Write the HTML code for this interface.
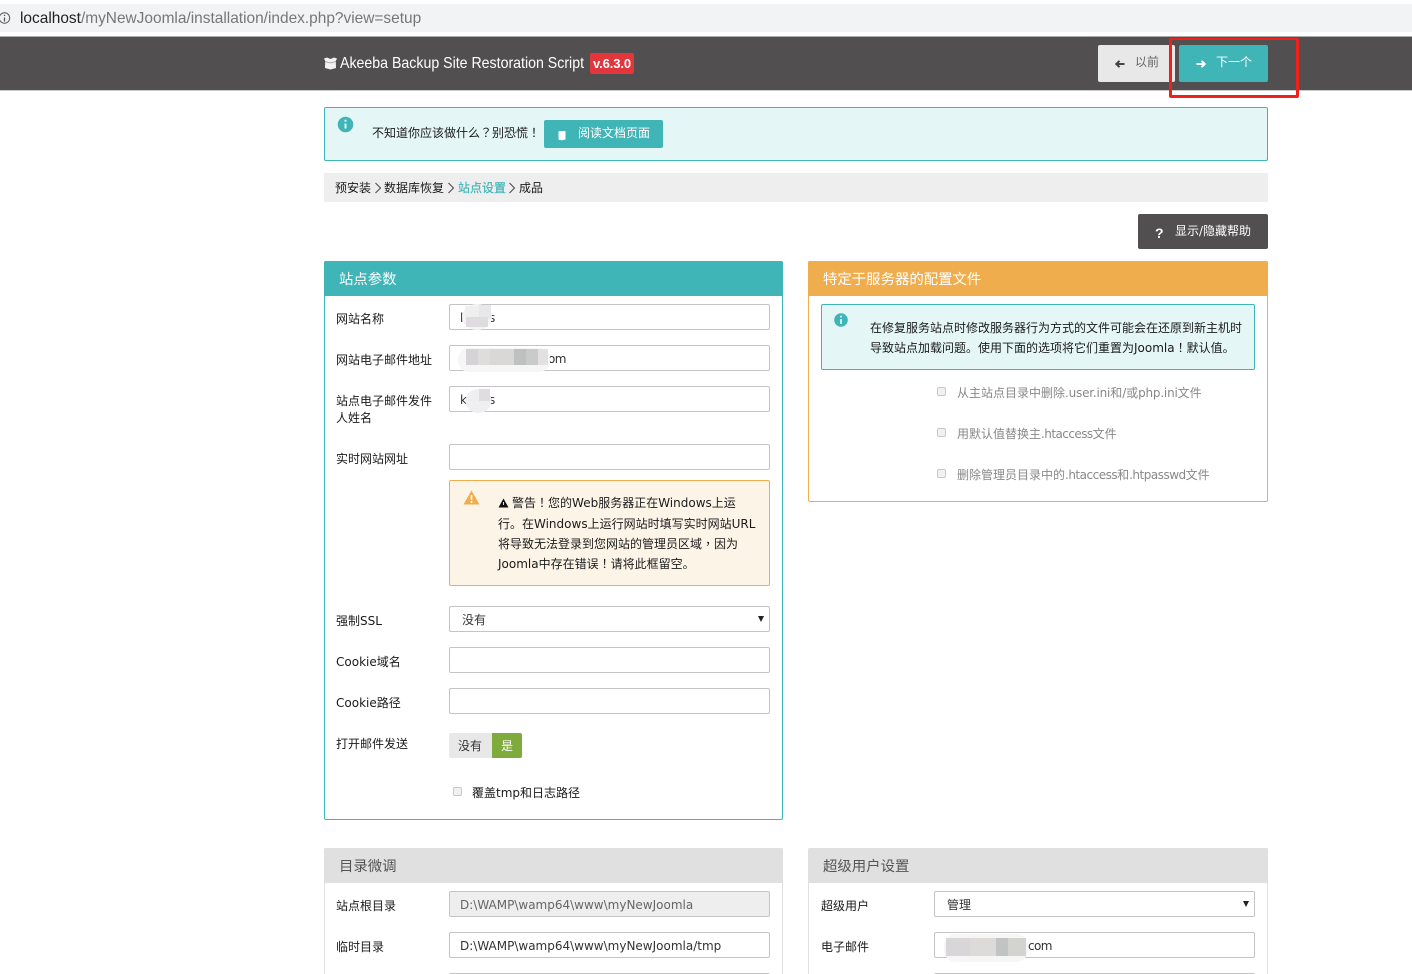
<!DOCTYPE html>
<html><head><meta charset="utf-8"><style>
html,body{margin:0;padding:0;background:#fff;width:1412px;height:974px;overflow:hidden}
body{position:relative;font-family:"DejaVu Sans","Noto Sans CJK SC",sans-serif;font-size:12px;color:#1a1a1a}
.a{position:absolute;white-space:nowrap}
.t{position:absolute;white-space:nowrap;line-height:20px;font-size:12px;color:#1a1a1a}
.c{font-family:"Liberation Sans","Noto Sans CJK SC",sans-serif}
.z{font-family:"Noto Sans CJK TC",sans-serif}
.i{position:absolute;box-sizing:border-box;left:449px;width:321px;height:26px;background:#fff;border:1px solid #c4c4c4;border-radius:2px;font-size:12px;line-height:26px;padding-left:10px;color:#333;white-space:nowrap}
.p{position:absolute;box-sizing:border-box;border-radius:2px}
.h{position:absolute;height:35px;line-height:38px;font-size:14.4px;padding-left:15px;box-sizing:border-box;border-radius:2px 2px 0 0}
.cb{position:absolute;box-sizing:border-box;width:9px;height:9px;border:1px solid #c8c8c8;background:#f1f1f1;border-radius:2px}
.blur{position:absolute}
.arrow{position:absolute;width:0;height:0;border-left:3.5px solid transparent;border-right:3.5px solid transparent;border-top:6px solid #222}
</style></head><body>

<div class="a" style="left:0;top:4px;width:1412px;height:28px;background:#f1f3f4"></div>
<svg class="a" style="left:0;top:12px" width="12" height="13" viewBox="0 0 12 13"><circle cx="4.500" cy="6" r="5.200" fill="none" stroke="#555" stroke-width="1"/><path d="M4.500 5.500v4M4.500 2.800v1.200" stroke="#555" stroke-width="1.300"/></svg>
<div class="a c" style="left:20px;top:9px;line-height:20px;font-size:15.45px;color:#777"><span style="color:#222">localhost</span>/myNewJoomla/installation/index.php?view=setup</div>

<div class="a" style="left:0;top:36px;width:1412px;height:1px;background:#aaa"></div>
<div class="a" style="left:0;top:37px;width:1412px;height:53px;background:#514f50"></div>
<div class="a" style="left:0;top:90px;width:1412px;height:1px;background:#ccc"></div>

<svg class="a" style="left:323px;top:57px" width="15" height="13" viewBox="0 0 15 13"><path d="M1 1.500L4 .5 7.500 2 11 .5 14 1.500 12.800 4 13 11 7.500 12.500 2 11 2.200 4z" fill="#f2f2f2"/><path d="M2 4.500L7.500 6 13 4.500" stroke="#999" fill="none" stroke-width=".8"/></svg>
<div class="a c" style="left:340px;top:53px;line-height:22px;font-size:16px;color:#fff;transform:scaleX(.885);transform-origin:0 0">Akeeba Backup Site Restoration Script</div>
<div class="a c" style="left:590px;top:53px;width:44px;height:21px;background:#e2363c;border-radius:2px;color:#fff;font-size:13px;font-weight:bold;line-height:21px;text-align:center;letter-spacing:-.1px">v.6.3.0</div>

<div class="p" style="left:1098px;top:45px;width:77px;height:37px;background:#e8e8e8"></div>
<svg class="a" style="left:1114px;top:59px" width="12" height="10" viewBox="0 0 12 10"><path d="M10.500 5H2.500M5.500 1.800L2.300 5l3.200 3.200" fill="none" stroke="#444" stroke-width="2"/></svg>
<div class="t" style="left:1135px;top:52px;color:#666">以前</div>
<div class="p" style="left:1179px;top:45px;width:89px;height:37px;background:#40b5b8"></div>
<svg class="a" style="left:1195px;top:59px" width="12" height="10" viewBox="0 0 12 10"><path d="M1.500 5H9.500M6.500 1.800L9.700 5 6.500 8.200" fill="none" stroke="#fff" stroke-width="2"/></svg>
<div class="t" style="left:1216px;top:52px;color:#fff">下一个</div>
<div class="a" style="left:1169px;top:38px;width:130px;height:60px;box-sizing:border-box;border:3px solid #f0211b;border-top-width:2px;border-radius:2px"></div>

<div class="p" style="left:324px;top:107px;width:944px;height:54px;background:#e5f6f6;border:1px solid #40b5b8"></div>
<svg class="a" style="left:337px;top:116px" width="17" height="17" viewBox="0 0 17 17"><circle cx="8.500" cy="8.500" r="7.800" fill="#40b5b8"/><path d="M8.500 7.500v5M8.500 3.800v1.800" stroke="#e5f6f6" stroke-width="2"/></svg>
<div class="t" style="left:372px;top:123px">不知道你应该做什么<span class="z">？</span>别恐慌<span class="z">！</span></div>
<div class="p" style="left:544px;top:120px;width:119px;height:28px;background:#40b5b8"></div>
<svg class="a" style="left:557px;top:130px" width="10" height="11" viewBox="0 0 10 11"><path d="M1.500 1.500L2.500 1h6v8.500l-2.500.5-1.500 .5-.5-.5H2.500L1.500 9.500z" fill="#fff"/></svg>
<div class="t" style="left:578px;top:123px;color:#fff">阅读文档页面</div>

<div class="a" style="left:324px;top:173px;width:944px;height:29px;background:#eee"></div>
<div class="t" style="left:335px;top:178px">预安装</div>
<svg class="a" style="left:374px;top:182px" width="8" height="12" viewBox="0 0 8 12"><path d="M1.500 1l5 5-5 5" fill="none" stroke="#444" stroke-width="1"/></svg>
<div class="t" style="left:384px;top:178px">数据库恢复</div>
<svg class="a" style="left:447px;top:182px" width="8" height="12" viewBox="0 0 8 12"><path d="M1.500 1l5 5-5 5" fill="none" stroke="#444" stroke-width="1"/></svg>
<div class="t" style="left:458px;top:178px;color:#40b5b8;-webkit-text-stroke:.2px #40b5b8">站点设置</div>
<svg class="a" style="left:508px;top:182px" width="8" height="12" viewBox="0 0 8 12"><path d="M1.500 1l5 5-5 5" fill="none" stroke="#444" stroke-width="1"/></svg>
<div class="t" style="left:519px;top:178px">成品</div>

<div class="p" style="left:1138px;top:214px;width:130px;height:35px;background:#514f50"></div>
<div class="a c" style="left:1155px;top:224px;color:#fff;font-size:14px;font-weight:bold;line-height:18px">?</div>
<div class="t" style="left:1175px;top:221px;color:#fff">显示/隐藏帮助</div>

<!-- left panel -->
<div class="p" style="left:324px;top:261px;width:459px;height:559px;border:1px solid #40b5b8"></div>
<div class="h" style="left:324px;top:261px;width:459px;background:#40b5b8;color:#fff">站点参数</div>
<div class="t" style="left:336px;top:309px">网站名称</div>
<div class="i" style="top:304px">k<span style="margin-left:22px">s</span></div>
<svg class="blur" style="left:461px;top:303px" width="33" height="28"><ellipse cx="16" cy="14" rx="15" ry="13" fill="#f4f4f4"/><rect x="4" y="3" width="14" height="11" fill="#efefef"/><rect x="18" y="2" width="12" height="14" fill="#e8e7e9"/><rect x="5" y="14" width="22" height="10" fill="#dedcde"/></svg>
<div class="t" style="left:336px;top:350px">网站电子邮件地址</div>
<div class="i" style="top:345px"><span style="margin-left:88px;letter-spacing:-.6px">om</span></div>
<svg class="blur" style="left:458px;top:348px" width="92" height="26"><rect x="0" width="92" height="24" rx="11" fill="#f6f6f6"/><rect x="8" y="1" width="12" height="16" fill="#d5d3d5"/><rect x="20" y="1" width="12" height="16" fill="#dedddb"/><rect x="32" y="1" width="24" height="16" fill="#d9d8d6"/><rect x="56" y="1" width="12" height="16" fill="#bfc1c1"/><rect x="68" y="1" width="12" height="16" fill="#c8cbc9"/><rect x="80" y="1" width="10" height="16" fill="#e2e1df"/></svg>
<div class="t" style="left:336px;top:391px">站点电子邮件发件</div>
<div class="t" style="left:336px;top:408px">人姓名</div>
<div class="i" style="top:386px">k<span style="margin-left:22px">s</span></div>
<svg class="blur" style="left:465px;top:389px" width="28" height="25"><ellipse cx="13.500" cy="12" rx="13" ry="12" fill="#efeef0"/><rect x="14" y="0" width="11" height="12" fill="#dfdde0"/></svg>
<div class="t" style="left:336px;top:449px">实时网站网址</div>
<div class="i" style="top:444px"></div>

<div class="p" style="left:449px;top:480px;width:321px;height:106px;background:#fdf4e8;border:1px solid #f0ad4e"></div>
<svg class="a" style="left:463px;top:490px" width="17" height="15" viewBox="0 0 17 15"><path d="M8.500 .5L16.500 14.500H.5z" fill="#f0ad4e"/><path d="M8.500 5v5M8.500 11v2" stroke="#fdf4e8" stroke-width="1.700"/></svg>
<svg class="a" style="left:498px;top:498px" width="11" height="10" viewBox="0 0 11 10"><path d="M5.500 .5L10.500 9.500H.5z" fill="#111"/><path d="M5.500 4v3" stroke="#fff" stroke-width=".9"/></svg>
<div class="t" style="left:512px;top:493px">警告<span class="z">！</span>您的Web服务器正在Windows上运</div>
<div class="t" style="left:498px;top:514px">行。在Windows上运行网站时填写实时网站URL</div>
<div class="t" style="left:498px;top:534px">将导致无法登录到您网站的管理员区域<span class="z">，</span>因为</div>
<div class="t" style="left:498px;top:554px">Joomla中存在错误<span class="z">！</span>请将此框留空。</div>

<div class="t" style="left:336px;top:611px">强制SSL</div>
<div class="i" style="top:606px;padding-left:12px;line-height:26px">没有</div>
<div class="arrow" style="left:758px;top:616px"></div>
<div class="t" style="left:336px;top:652px">Cookie域名</div>
<div class="i" style="top:647px"></div>
<div class="t" style="left:336px;top:693px">Cookie路径</div>
<div class="i" style="top:688px"></div>
<div class="t" style="left:336px;top:734px">打开邮件发送</div>
<div class="p" style="left:449px;top:733px;width:43px;height:25px;background:#e8e8e8;border-radius:2px 0 0 2px"></div>
<div class="t" style="left:458px;top:736px;color:#333">没有</div>
<div class="p" style="left:492px;top:733px;width:30px;height:25px;background:#7fab3c;border-radius:0 2px 2px 0"></div>
<div class="t" style="left:501px;top:736px;color:#fff">是</div>
<div class="cb" style="left:453px;top:787px"></div>
<div class="t" style="left:472px;top:783px">覆盖tmp和日志路径</div>

<!-- right panel -->
<div class="p" style="left:808px;top:261px;width:460px;height:241px;border:1px solid #f0ad4e"></div>
<div class="h" style="left:808px;top:261px;width:460px;background:#f0ad4e;color:#fff">特定于服务器的配置文件</div>
<div class="p" style="left:821px;top:304px;width:434px;height:66px;background:#e5f6f6;border:1px solid #40b5b8"></div>
<svg class="a" style="left:834px;top:313px" width="14" height="14" viewBox="0 0 14 14"><circle cx="7" cy="7" r="6.800" fill="#40b5b8"/><path d="M7 6v5M7 2.800v1.600" stroke="#e5f6f6" stroke-width="1.800"/></svg>
<div class="t" style="left:870px;top:318px">在修复服务站点时修改服务器行为方式的文件可能会在还原到新主机时</div>
<div class="t" style="left:870px;top:338px">导致站点加载问题。使用下面的选项将它们重置为Joomla<span class="z">！</span>默认值。</div>
<div class="cb" style="left:937px;top:387px"></div>
<div class="t" style="left:957px;top:383px;color:#888">从主站点目录中删除<span style="letter-spacing:-.2px">.user.ini</span>和<span style="letter-spacing:-.2px">/</span>或<span style="letter-spacing:-.2px">php.ini</span>文件</div>
<div class="cb" style="left:937px;top:428px"></div>
<div class="t" style="left:957px;top:424px;color:#888">用默认值替换主<span style="letter-spacing:-.55px">.htaccess</span>文件</div>
<div class="cb" style="left:937px;top:469px"></div>
<div class="t" style="left:957px;top:465px;color:#888">删除管理员目录中的<span style="letter-spacing:-.5px">.htaccess</span>和<span style="letter-spacing:-.5px">.htpasswd</span>文件</div>

<!-- bottom left -->
<div class="p" style="left:324px;top:848px;width:459px;height:140px;border:1px solid #e0e0e0"></div>
<div class="h" style="left:324px;top:848px;width:459px;background:#e0e0e0;color:#555">目录微调</div>
<div class="t" style="left:336px;top:896px">站点根目录</div>
<div class="i" style="top:891px;background:#eee;color:#666">D:\WAMP\wamp64\www\myNewJoomla</div>
<div class="t" style="left:336px;top:937px">临时目录</div>
<div class="i" style="top:932px">D:\WAMP\wamp64\www\myNewJoomla/tmp</div>
<div class="i" style="top:973px"></div>

<!-- bottom right -->
<div class="p" style="left:808px;top:848px;width:460px;height:140px;border:1px solid #e0e0e0"></div>
<div class="h" style="left:808px;top:848px;width:460px;background:#e0e0e0;color:#555">超级用户设置</div>
<div class="t" style="left:821px;top:896px">超级用户</div>
<div class="i" style="left:934px;top:891px;padding-left:12px;line-height:26px">管理</div>
<div class="arrow" style="left:1243px;top:901px"></div>
<div class="t" style="left:821px;top:937px">电子邮件</div>
<div class="i" style="left:934px;top:932px"><span style="margin-left:83px;letter-spacing:-.6px">com</span></div>
<svg class="blur" style="left:944px;top:934px" width="86" height="30"><rect x="0" y="0" width="84" height="28" rx="12" fill="#f6f6f6"/><rect x="2" y="4" width="24" height="18" fill="#d8d6d8"/><rect x="26" y="4" width="26" height="18" fill="#dcdbd9"/><rect x="52" y="4" width="12" height="18" fill="#c2c4c4"/><rect x="64" y="4" width="18" height="18" fill="#d3d4d0"/></svg>
<div class="i" style="left:934px;top:973px"></div>

</body></html>
